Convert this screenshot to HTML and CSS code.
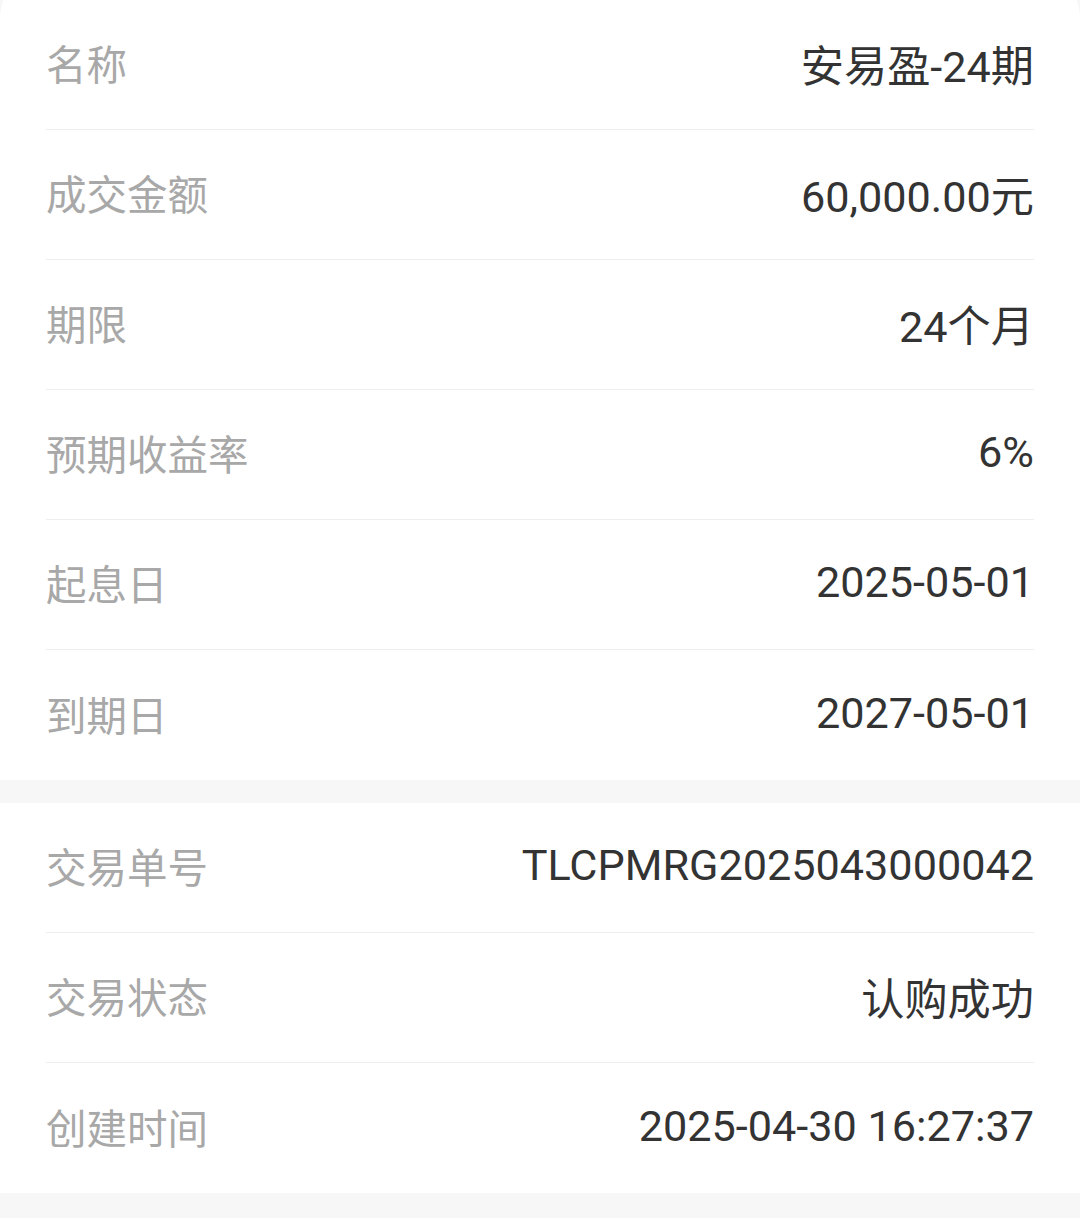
FILE: index.html
```html
<!DOCTYPE html>
<html lang="zh-CN">
<head>
    <meta charset="UTF-8">
    <meta name="viewport" content="width=device-width, initial-scale=1.0">
    <title>交易详情</title>
    <link rel="stylesheet" href="styles.css">
</head>
<body>
    <div class="card card-top">
        <div class="row"><span class="label">名称</span><span class="value">安易盈-24期</span></div>
        <div class="row"><span class="label">成交金额</span><span class="value">60,000.00元</span></div>
        <div class="row"><span class="label">期限</span><span class="value">24个月</span></div>
        <div class="row"><span class="label">预期收益率</span><span class="value">6%</span></div>
        <div class="row"><span class="label">起息日</span><span class="value">2025-05-01</span></div>
        <div class="row"><span class="label">到期日</span><span class="value">2027-05-01</span></div>
    </div>
    <div class="card">
        <div class="row"><span class="label">交易单号</span><span class="value">TLCPMRG2025043000042</span></div>
        <div class="row"><span class="label">交易状态</span><span class="value">认购成功</span></div>
        <div class="row"><span class="label">创建时间</span><span class="value">2025-04-30 16:27:37</span></div>
    </div>
</body>
</html>
```

FILE: styles.css
```css
*{
    margin: 0;
    padding: 0;
    box-sizing: border-box;
}
body{
    width: 100%;
    min-height: 100vh;
    background: #f7f7f7;
    font-family: Roboto, "Noto Sans CJK SC", sans-serif;
    overflow: hidden;
}
.card{
    background: #fff;
    padding: 0 46px;
    margin-bottom: 23px;
}
.card-top{
    margin-top: -40px;
    padding-top: 40px;
    border-radius: 60px 60px 0 0;
}
.row{
    height: 130px;
    padding-bottom: 4px;
    display: flex;
    align-items: center;
    justify-content: space-between;
    border-bottom: 1px solid #eeeeee;
}
.row:last-child{
    border-bottom: none;
}
.label{
    font-size: 40.5px;
    color: #a8a8a8;
}
.value{
    font-size: 43.2px;
    color: #333;
}
```
